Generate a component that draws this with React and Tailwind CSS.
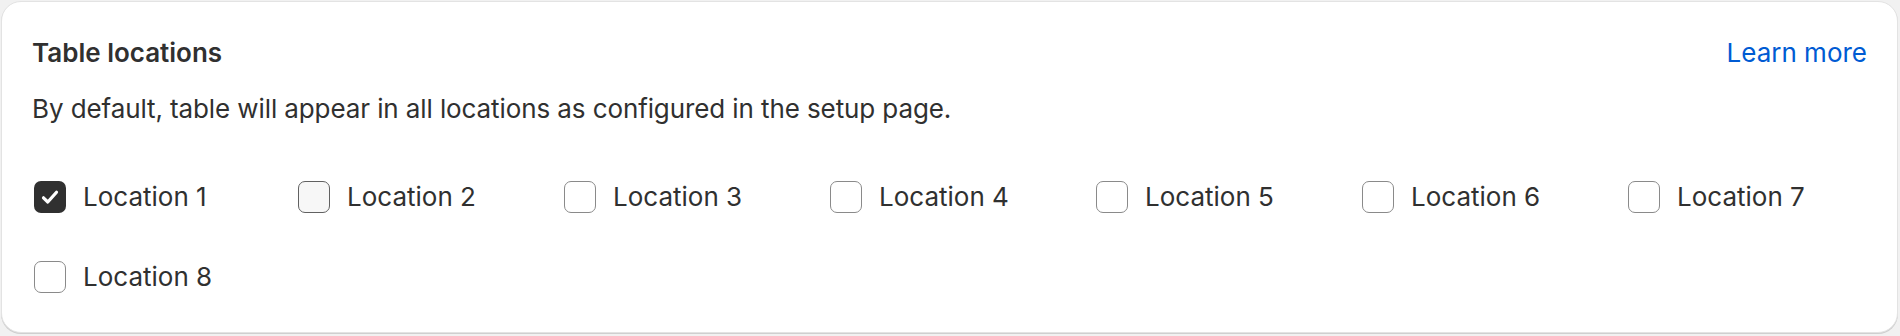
import React from 'react';

const locations = [
  'Location 1',
  'Location 2',
  'Location 3',
  'Location 4',
  'Location 5',
  'Location 6',
  'Location 7',
  'Location 8',
];

function Checkbox({ checked, hovered }) {
  if (checked) {
    return (
      <span className="w-[32px] h-[32px] rounded-[7px] bg-[#303030] flex items-center justify-center shrink-0">
        <svg width="32" height="32" viewBox="0 0 32 32" fill="none">
          <path d="M9.5 16.8 L13.8 21 L22.5 11.2" stroke="#fff" strokeWidth="3.2" strokeLinecap="round" strokeLinejoin="round" />
        </svg>
      </span>
    );
  }
  return (
    <span
      className={`w-[32px] h-[32px] rounded-[7px] border-[1.5px] shrink-0 ${
        hovered ? 'bg-[#f7f7f7] border-[#616161]' : 'bg-white border-[#8a8a8a]'
      }`}
    />
  );
}

export default function App() {
  return (
    <div className="w-[1900px] h-[336px] bg-[#f1f1f1] pl-px pt-px" style={{ fontFamily: 'Inter, "Liberation Sans", sans-serif' }}>
      <div className="w-[1897px] h-[332px] bg-white rounded-[20px] border border-[#e3e3e3] shadow-[0_1px_0_#cfcfcf] px-[30px] pt-[31px] text-[#303030]">
        <div className="flex items-center justify-between h-[40px]">
          <h2 className="text-[26px] leading-[40px] font-semibold">Table locations</h2>
          <a className="text-[26px] leading-[40px] text-[#005bd3]">Learn more</a>
        </div>
        <p className="mt-[16px] text-[26px] leading-[40px] tracking-[-0.1px]">
          By default, table will appear in all locations as configured in the setup page.
        </p>
        <div className="mt-[48px] grid grid-cols-[repeat(7,236px)] gap-x-[30px] gap-y-[40px]">
          {locations.map((name, i) => (
            <label key={name} className={`flex items-center h-[40px] ${i % 7 === 0 ? 'ml-[2px]' : ''}`}>
              <Checkbox checked={i === 0} hovered={i === 1} />
              <span className="ml-[17px] text-[26px] leading-[40px]">{name}</span>
            </label>
          ))}
        </div>
      </div>
    </div>
  );
}
